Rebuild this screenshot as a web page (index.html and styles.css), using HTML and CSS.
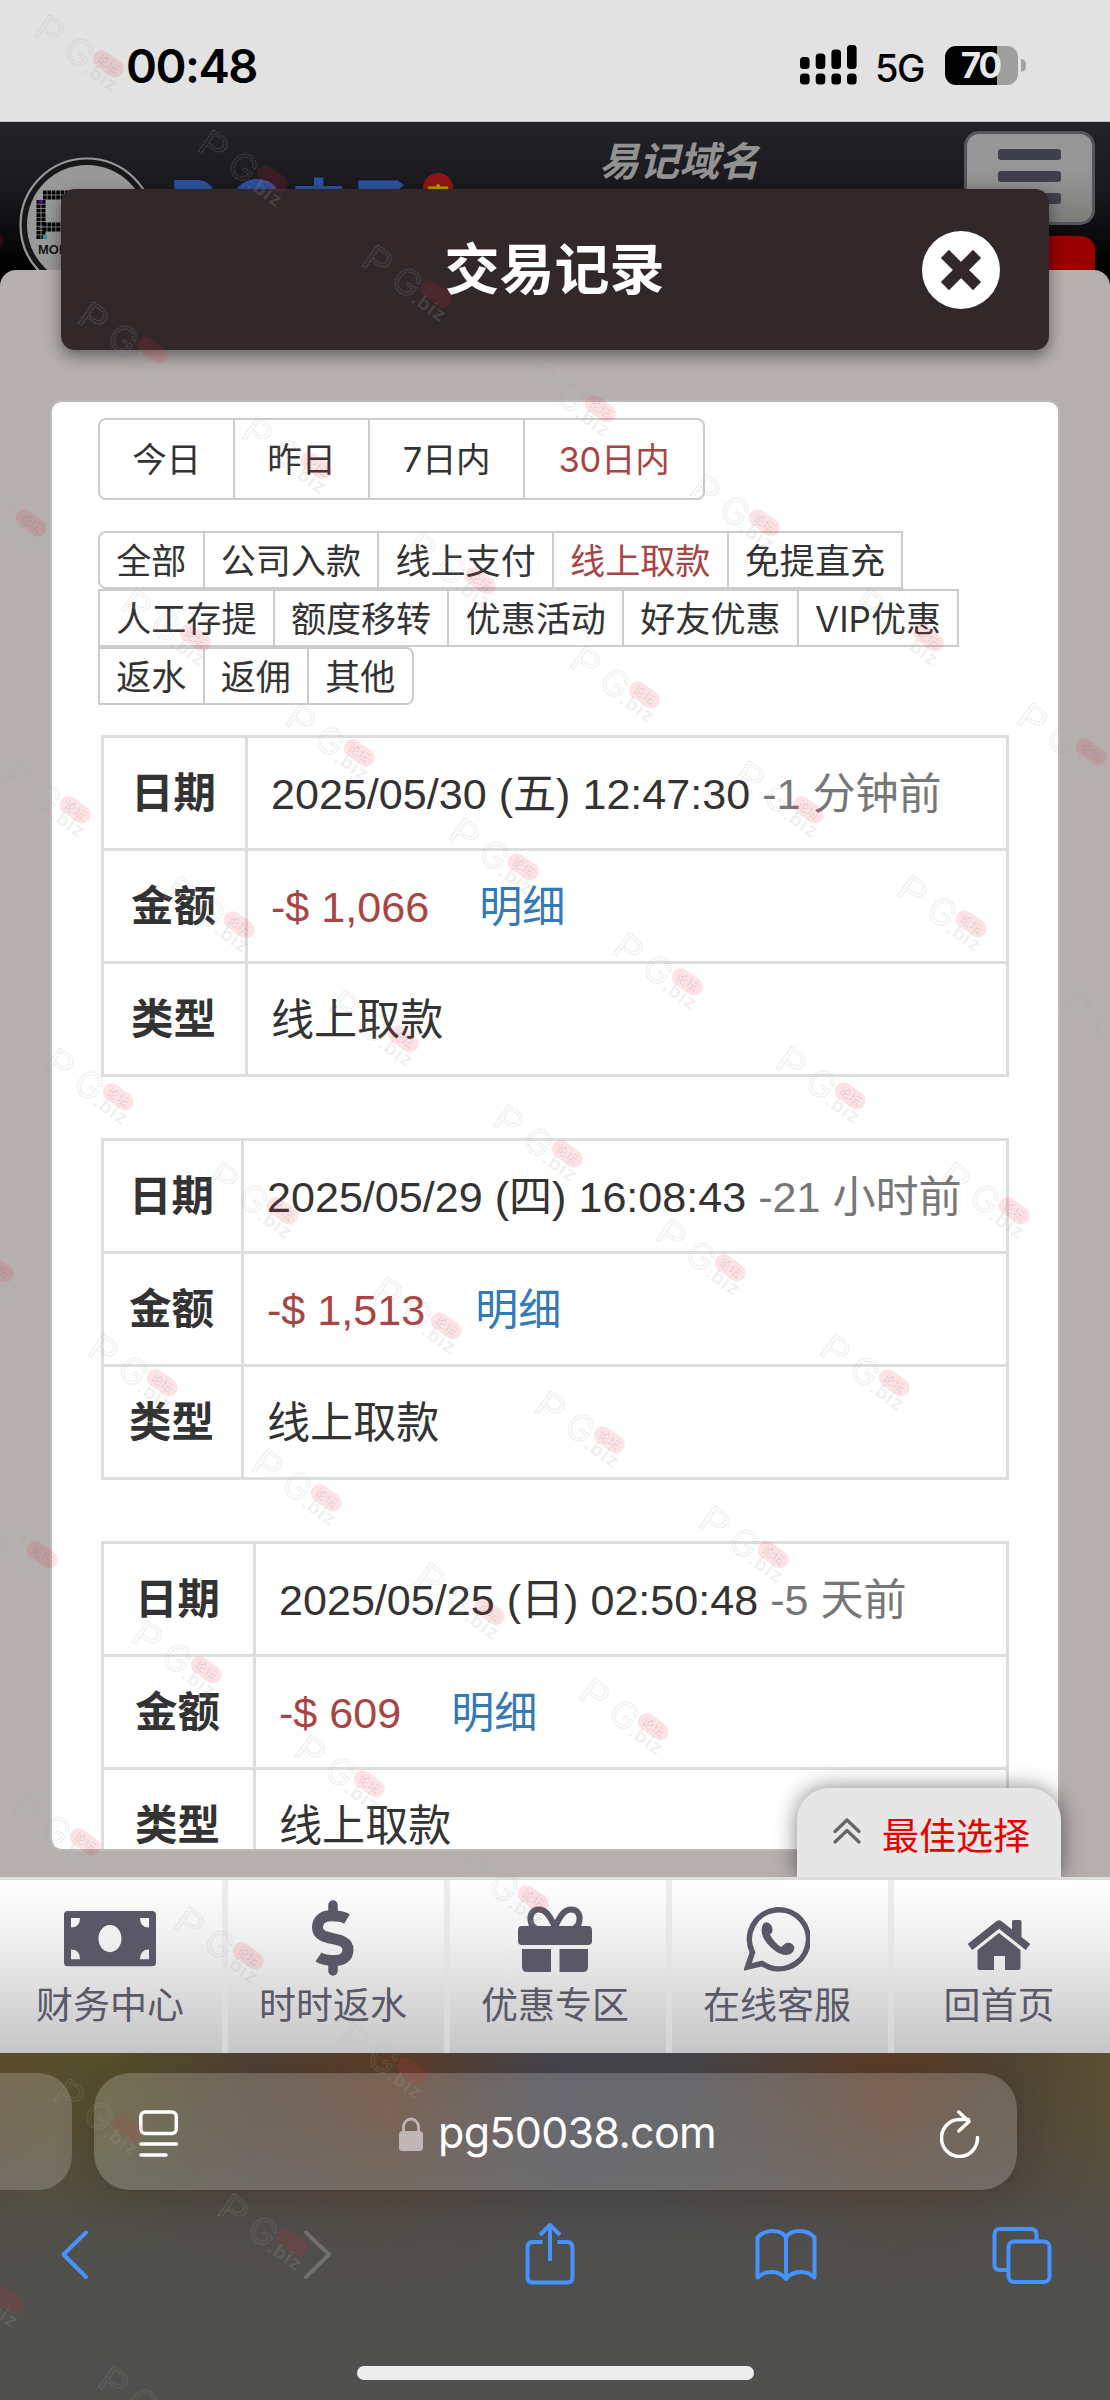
FILE: index.html
```html
<!DOCTYPE html>
<html lang="zh-CN">
<head>
<meta charset="utf-8">
<title>交易记录</title>
<link rel="stylesheet" href="styles.css">
</head>
<body>
<div class="screen">
  <header class="status">
    <span class="clock">00:48</span>
    <div class="status-right">
      <svg class="signal" width="57" height="40" viewBox="0 0 57 40">
        <rect x="0" y="12" width="9.6" height="12" rx="3.5"/><rect x="15.7" y="8.5" width="9.6" height="15.5" rx="3.5"/><rect x="31.4" y="4.5" width="9.6" height="19.5" rx="3.5"/><rect x="47" y="0" width="9.6" height="24" rx="3.5"/>
        <rect x="0" y="28.5" width="9.6" height="11" rx="3.5"/><rect x="15.7" y="28.5" width="9.6" height="11" rx="3.5"/><rect x="31.4" y="28.5" width="9.6" height="11" rx="3.5"/><rect x="47" y="28.5" width="9.6" height="11" rx="3.5"/>
      </svg>
      <span class="network">5G</span>
      <div class="battery"><span>70</span></div>
      <i class="battery-tip"></i>
    </div>
  </header>

  <main class="site">
    <div class="site-header">
      <svg class="logo" width="136" height="136" viewBox="0 0 136 136">
        <circle cx="68" cy="68" r="66.5" fill="#18181b" stroke="#999" stroke-width="2.2"/>
        <circle cx="68" cy="68" r="60" fill="#999"/>
        <path d="M24 38h30M22 43v39M24 70h30" fill="none" stroke="#050505" stroke-width="9" stroke-dasharray="3.7 .7"/>
        <path d="M22 38v46M20 70h34M20 38h34" fill="none" stroke="#999" stroke-width=".8"/>
        <path d="M20 43h4v4h-4z" fill="#40158f"/><path d="M24 78h4v4h-4z" fill="#2391b5"/>
        <text x="19" y="97" font-size="13" font-weight="700" fill="#151515">MOBILE</text>
      </svg>
      <span class="brand"><b>P</b><b>G</b><span>电</span><span>子</span></span>
      <span class="emblem">官</span>
      <span class="domain">易记域名</span>
      <div class="header-actions">
        <div class="menu"><i></i><i></i><i></i></div>
        <div class="red-button"></div>
      </div>
    </div>
    <div class="page"></div>

    <section class="dialog-title">
      <h1>交易记录</h1>
      <svg class="close" width="78" height="78" viewBox="0 0 78 78"><circle cx="39" cy="39" r="39" fill="#fff"/><path d="M27 27l24 24M51 27L27 51" fill="none" stroke="#32282a" stroke-width="11.5" stroke-linecap="square" stroke-linejoin="round"/></svg>
    </section>

    <section class="dialog-body">
      <div class="range">
        <span>今日</span><span>昨日</span><span>7日内</span><span class="active">30日内</span>
      </div>
      <div class="filters">
        <div><span>全部</span><span>公司入款</span><span>线上支付</span><span class="active">线上取款</span><span>免提直充</span></div>
        <div><span>人工存提</span><span>额度移转</span><span>优惠活动</span><span>好友优惠</span><span>VIP优惠</span></div>
        <div><span>返水</span><span>返佣</span><span>其他</span></div>
      </div>
      <table class="record record-a">
        <tr><th>日期</th><td>2025/05/30 (五) 12:47:30 <small>-1 分钟前</small></td></tr>
        <tr><th>金额</th><td><b>-$ 1,066</b><a>明细</a></td></tr>
        <tr><th>类型</th><td>线上取款</td></tr>
      </table>
      <table class="record record-b">
        <tr><th>日期</th><td>2025/05/29 (四) 16:08:43 <small>-21 小时前</small></td></tr>
        <tr><th>金额</th><td><b>-$ 1,513</b><a>明细</a></td></tr>
        <tr><th>类型</th><td>线上取款</td></tr>
      </table>
      <table class="record record-c">
        <tr><th>日期</th><td>2025/05/25 (日) 02:50:48 <small>-5 天前</small></td></tr>
        <tr><th>金额</th><td><b>-$ 609</b><a>明细</a></td></tr>
        <tr><th>类型</th><td>线上取款</td></tr>
      </table>
    </section>

    <div class="best">
      <svg width="28" height="26" viewBox="0 0 28 26"><path d="M2 13.5L14 2l12 11.500M2 24l12-11.500L26 24" fill="none" stroke="#666" stroke-width="3.2" stroke-linecap="round" stroke-linejoin="round"/></svg>
      <span>最佳选择</span>
    </div>
  </main>

  <nav class="tabs">
    <div class="tab">
      <svg width="92" height="76" viewBox="0 0 92 76"><path fill-rule="evenodd" d="M4 11h84q4 0 4 4v55q0 4-4 4H4q-4 0-4-4V15q0-4 4-4zM7 19v11q9 0 9-11zM85 19v11q-9 0-9-11zM7 66v-11q9 0 9 11zM85 66v-11q-9 0-9 11zM46 27c-6.500 0-11.500 7-11.500 15.500S39.500 58 46 58s11.500-7 11.500-15.500S52.500 27 46 27z" transform="translate(0 1.200) scale(1 .88)"/></svg>
      <span>财务中心</span>
    </div>
    <div class="tab">
      <svg width="44" height="76" viewBox="0 0 44 76"><path d="M22 5v10M22 62v9" fill="none" stroke="#5a5866" stroke-width="9.500" stroke-linecap="round"/><path d="M36 19C31 16 26 15.800 20 15.800C11.500 15.800 6.500 20 6.500 27.500C6.500 43 37 34.500 37 49.500C37 57 32 60.500 24 60.500C17.500 60.500 12 60 7.500 57" fill="none" stroke="#5a5866" stroke-width="11" stroke-linejoin="round"/></svg>
      <span>时时返水</span>
    </div>
    <div class="tab">
      <svg width="74" height="76" viewBox="0 0 74 76"><path d="M37 27C31 14 27 9.500 21 9.500c-7 0-10 6-8 13 .5 3 3 5 5 6M37 27C43 14 47 9.500 53 9.500c7 0 10 6 8 13-.5 3-3 5-5 6" fill="none" stroke="#5a5866" stroke-width="6"/><path d="M4 26h66q4 0 4 4v11q0 4-4 4H4q-4 0-4-4V30q0-4 4-4zM4 49h29V72H9q-5 0-5-5zM41.500 49H70V67q0 5-5 5H41.500z"/></svg>
      <span>优惠专区</span>
    </div>
    <div class="tab">
      <svg width="66" height="76" viewBox="0 0 66 76"><path d="M3.500 67L8.500 52.500A29.500 29.500 0 1 1 18 63.500z" fill="none" stroke="#5a5866" stroke-width="5.500"/><path d="M19 24q3-3 6-1 4 3 3.500 8-.2 2-2.500 3.500 4 8 11 12.500l5-4q7-1 8.500 5-1 6-8 7-7 .5-16-8Q14 35 19 24z"/></svg>
      <span>在线客服</span>
    </div>
    <div class="tab">
      <svg width="66" height="76" viewBox="0 0 66 76"><path d="M4 47L33 24 62 47" fill="none" stroke="#5a5866" stroke-width="7.500" stroke-linejoin="round"/><path d="M46 22q0-2 2-2h5.500q2 0 2 2v17L46 30zM33 33l21.500 17v18q0 2-2 2H39V56H28v14H13.500q-2 0-2-2V50z"/></svg>
      <span>回首页</span>
    </div>
  </nav>

  <footer class="browser">
    <div class="address-row">
      <div class="prev-tab"></div>
      <div class="address">
        <svg width="40" height="48" viewBox="0 0 40 48" fill="none" stroke="#fff" stroke-width="3.500" stroke-linecap="round"><rect x="1.800" y="2" width="35.500" height="21.500" rx="4.500"/><path d="M2 34h35.500M2 45h25"/></svg>
        <div class="url">
          <svg width="24" height="34" viewBox="0 0 24 34"><path d="M4.500 15V10a7.500 8 0 0 1 15 0v5" fill="none" stroke="#c0b6b5" stroke-width="2.800"/><rect x="0" y="14" width="24" height="20" rx="3.500" fill="#c0b6b5"/></svg>
          <span>pg50038.com</span>
        </div>
        <svg width="40" height="48" viewBox="0 0 40 48" fill="none" stroke="#fff" stroke-width="3.500" stroke-linecap="round" stroke-linejoin="round"><path d="M37.500 27.500A18 18.500 0 1 1 19.500 9.500h9M18.800 2L29 11.500 18.800 21"/></svg>
      </div>
    </div>
    <div class="toolbar">
      <svg width="30" height="62" viewBox="0 0 30 62"><path d="M26 9.500L3.500 31.500 26 54"/></svg>
      <svg class="disabled" width="30" height="62" viewBox="0 0 30 62"><path d="M4 9.500L27 31.500 4 54"/></svg>
      <svg width="50" height="62" viewBox="0 0 50 62"><path d="M17.500 19H8q-5.500 0-5.500 5.500v29.500q0 5.500 5.500 5.500h34q5.500 0 5.500-5.500v-29.500Q47.500 19 42 19h-9.500M25 38V2M15 12L25 2l10 10" stroke-linecap="butt"/></svg>
      <svg width="64" height="62" viewBox="0 0 64 62"><path d="M32 56V14C26 6 11 6 3.500 14.500v40C11 47 25 47 32 56C39 47 53 47 60.500 54.500v-40C53 6 38 6 32 14"/></svg>
      <svg width="60" height="62" viewBox="0 0 60 62"><path d="M44.500 18v-6.500q0-5.500-5.500-5.500H8q-5.500 0-5.500 5.500v30q0 5.500 5.500 5.500h7"/><rect x="16.500" y="18.500" width="41" height="40.500" rx="5.500"/></svg>
    </div>
    <div class="home-indicator"></div>
  </footer>

  <svg class="watermark" width="1110" height="2400" viewBox="0 0 1110 2400">
    <defs>
      <g id="mark" transform="translate(33 35) rotate(35.500)">
        <text class="wm-letter" x="-2" y="0" font-size="36" textLength="27" lengthAdjust="spacingAndGlyphs">P</text>
        <text class="wm-letter" x="34" y="0" font-size="36" textLength="27" lengthAdjust="spacingAndGlyphs">G</text>
        <rect x="61" y="-29" width="34" height="17.500" rx="8.700" fill="#f22a35" fill-opacity=".13"/>
        <text class="wm-pill" x="66" y="-15.500" font-size="12">论坛</text>
        <text class="wm-biz" x="61" y="1" font-size="19">.biz</text>
      </g>
      <g id="row">
        <use href="#mark"/><use href="#mark" x="164" y="115"/><use href="#mark" x="328" y="230"/><use href="#mark" x="492" y="345"/>
        <use href="#mark" x="656" y="459"/><use href="#mark" x="820" y="574"/><use href="#mark" x="983" y="688"/><use href="#mark" x="1147" y="803"/>
      </g>
    </defs>
    <use href="#row"/><use href="#row" x="-120" y="172"/><use href="#row" x="-241" y="344"/><use href="#row" x="-361" y="516"/><use href="#row" x="-482" y="688"/>
    <use href="#row" x="-602" y="860"/><use href="#row" x="-722" y="1032"/><use href="#row" x="-843" y="1204"/><use href="#row" x="-963" y="1376"/><use href="#row" x="-1083" y="1548"/>
  </svg>
</div>
</body>
</html>
```
FILE: styles.css
```css
* { box-sizing: border-box; }
body { margin: 0; font-family: "Liberation Sans", "Noto Sans CJK SC", sans-serif; color: #333; }
svg { display: block; flex: none; }
.screen { position: relative; width: 1110px; height: 2400px; overflow: hidden; display: flex; flex-direction: column; }

/* phone status bar */
.status { height: 122px; flex: none; display: flex; justify-content: space-between; padding: 0 84px 0 126px; background: #e2e2e2; border-bottom: 1px solid #c4c4c4; color: #000; font-family: Inter, sans-serif; }
.clock { font-size: 47px; font-weight: 600; line-height: 56px; margin-top: 38px; letter-spacing: -1.5px; }
.status-right { display: flex; align-items: center; height: 40px; margin-top: 45px; }
.network { width: 50px; margin: 5px 20px 0 18px; font-size: 38px; font-weight: 500; letter-spacing: -1.5px; line-height: 44px; }
.battery { width: 73px; height: 39px; border-radius: 11px; background: linear-gradient(90deg, #000 52px, #9e9e9e 52px); color: #e8e8e8; font-size: 35px; font-weight: 700; line-height: 39px; text-align: center; letter-spacing: -2px; padding-right: 2px; }
.battery-tip { width: 5px; height: 13px; margin-left: 3px; border-radius: 0 6px 6px 0; background: #a4a4a4; }

/* dimmed page behind the dialog */
.site { position: relative; height: 1755px; flex: none; background: #000; }
.site-header { height: 148px; display: flex; background: linear-gradient(#222227, #1a1a1e 45%, #000); overflow: hidden; }
.logo { margin: 35px 0 0 19px; font-family: "Liberation Sans", sans-serif; }
.brand { display: flex; width: 240px; margin: 48px 0 0 16px; color: #2b51a0; font: 900 60px/66px "Noto Sans CJK SC", sans-serif; }
.brand b { width: 59px; font: 900 70px/72px Inter, sans-serif; }
.brand span { width: 61px; flex: none; }
.emblem { width: 30px; height: 44px; margin: 51px 0 0 12px; border-radius: 15px; background: #8f1515; color: #b69a00; font: 700 23px/42px "Noto Sans CJK SC", sans-serif; text-align: center; }
.domain { width: 170px; margin: 13px 0 0 146px; color: #929292; font: italic 700 40px/48px "Noto Sans CJK SC", sans-serif; white-space: nowrap; }
.header-actions { margin: 9px 0 0 195px; display: flex; flex-direction: column; gap: 11px; }
.menu { width: 131px; height: 94px; flex: none; border: 3px solid #55555b; border-radius: 15px; background: linear-gradient(#969696 40%, #7c7c7a); display: flex; flex-direction: column; align-items: center; gap: 11.500px; padding-top: 15px; }
.menu i { width: 63px; height: 10.700px; border-radius: 3px; background: #40404c; }
.red-button { height: 50px; flex: none; border-radius: 14px; background: #900; }
.page { height: 1607px; background: #b5afae; border-radius: 16px 16px 0 0; }

/* dialog */
.dialog-title { position: absolute; left: 61px; top: 67px; width: 988px; height: 161px; border-radius: 14px; background: #32282a; box-shadow: 0 6px 16px rgba(0,0,0,.45); display: flex; align-items: center; }
.dialog-title h1 { margin: 0 0 10px; padding-left: 126px; flex: 1; text-align: center; color: #fff; font: 700 55px/80px "Noto Sans CJK SC", sans-serif; }
.close { margin-right: 49px; }
.dialog-body { position: absolute; left: 50px; top: 278px; width: 1010px; height: 1451px; overflow: hidden; border: 2px solid #bcbaba; border-radius: 11px; background: #fff; background-clip: padding-box; padding: 16px 46px 0; }
.range { display: flex; width: 607px; height: 82px; border: 2px solid #ccc; border-radius: 8px; font: 35px/79px Inter, "Noto Sans CJK SC", sans-serif; text-align: center; }
.range span { border-left: 2px solid #ccc; font-size: 34.500px; letter-spacing: -.3px; }
.range span:nth-child(1) { width: 133px; border-left: 0; }
.range span:nth-child(2) { width: 135px; }
.range span:nth-child(3) { width: 155px; }
.range span:nth-child(4) { flex: 1; }
.active { color: #a94442; }
.filters { margin-top: 31px; }
.filters div { display: flex; height: 58px; }
.filters span { height: 58px; padding: 0 16.200px; margin-left: -2px; border: 2px solid #ccc; font: 35.100px/56px Inter, "Noto Sans CJK SC", sans-serif; white-space: nowrap; }
.filters span:first-child { margin-left: 0; }
.filters div:first-child span:first-child { border-radius: 8px 0 0 8px; }
.filters div:last-child span:last-child { border-radius: 0 8px 8px 0; }

.record { width: 908px; margin: 30px 0 61px 3px; border-collapse: collapse; table-layout: fixed; font-size: 43.100px; line-height: 60px; }
.record + .record { margin-top: 0; }
.record-b { margin-bottom: 61px; }
.record tr { height: 113px; }
.record th, .record td { border: 3px solid #ddd; padding: 1px 0 0; text-align: center; }
.record td { text-align: left; padding-left: 23px; white-space: nowrap; }
.record th { width: 144px; font-weight: 700; font-size: 42.500px; padding-right: 2px; }
.record-b th { width: 140px; }
.record-c th { width: 152px; }
.record small { font-size: inherit; color: #777; }
.record b { font-weight: 400; color: #a94442; margin-right: 50px; }
.record a { color: #337ab7; }

.best { position: absolute; left: 797px; top: 1666px; width: 264px; height: 89px; border-radius: 32px 32px 0 0; background: #e6e6e6; box-shadow: 0 0 22px rgba(0,0,0,.5); display: flex; padding: 30px 0 0 36px; gap: 21px; color: #e60000; font: 37px/40px "Noto Sans CJK SC", sans-serif; }
.best span { margin-top: -4px; white-space: nowrap; }

/* site tab bar */
.tabs { position: relative; height: 176px; flex: none; display: flex; border-top: 3px solid #dcdcdc; background: linear-gradient(#fff, #efefef 35%, #c5c5c7); }
.tab { width: 222px; padding: 20px 6px 0 0; border-left: 6px solid rgba(225,225,225,.62); display: flex; flex-direction: column; align-items: center; color: #5a5866; font: 37px/54px "Noto Sans CJK SC", sans-serif; }
.tab:first-child { border-left: 0; padding-right: 2px; }
.tab svg { fill: #5a5866; }

/* browser chrome */
.browser { height: 347px; flex: none; padding-top: 20px; background: linear-gradient(rgba(80,80,78,0), rgba(80,80,78,.2) 20%, rgba(80,80,78,.85) 50%, #50504e 72%), linear-gradient(90deg, #5a4a2c, #544f28 10%, #4f4034 23%, #5c3d28 35%, #44454e 50%, #45464a 62%, #5c3c27 80%, #4f4333 91%, #5c4f31); }
.address-row { display: flex; gap: 22px; height: 117px; }
.prev-tab, .address { background: rgba(255,255,255,.19); }
.prev-tab { width: 72px; border-radius: 0 34px 34px 0; }
.address { width: 923px; border-radius: 36px; display: flex; align-items: center; justify-content: space-between; padding: 4px 37px 0 45px; box-shadow: 0 8px 40px rgba(40,20,10,.2); }
.url { display: flex; align-items: center; gap: 15px; margin-left: -4px; color: #fff; font: 43px/60px Inter, sans-serif; letter-spacing: -.7px; }
.url span { margin-top: -4px; }
.toolbar { position: relative; display: flex; margin-top: 33px; padding-left: 60px; fill: none; stroke: #4693ff; stroke-width: 4px; stroke-linecap: round; stroke-linejoin: round; }
.toolbar svg:nth-child(2) { margin-left: 212px; stroke: #70706d; }
.toolbar svg:nth-child(3) { margin-left: 193px; }
.toolbar svg:nth-child(4) { margin-left: 179px; }
.toolbar svg:nth-child(5) { margin-left: 174px; }
.home-indicator { width: 397px; height: 14px; margin: 81px 0 0 357px; border-radius: 7px; background: #ededed; }

/* tiled forum watermark */
.watermark { position: absolute; left: 0; top: 0; pointer-events: none; font-family: Inter, "Noto Sans CJK SC", sans-serif; }
.wm-letter { fill: #aaa; fill-opacity: .04; stroke: #aaa; stroke-opacity: .28; stroke-width: 1.200px; stroke-dasharray: 1.500px 1px; font-weight: 400; }
.wm-biz { fill: #aaa; fill-opacity: .2; font-weight: 600; letter-spacing: 1px; }
.wm-pill { fill: #555; fill-opacity: .16; }
```
